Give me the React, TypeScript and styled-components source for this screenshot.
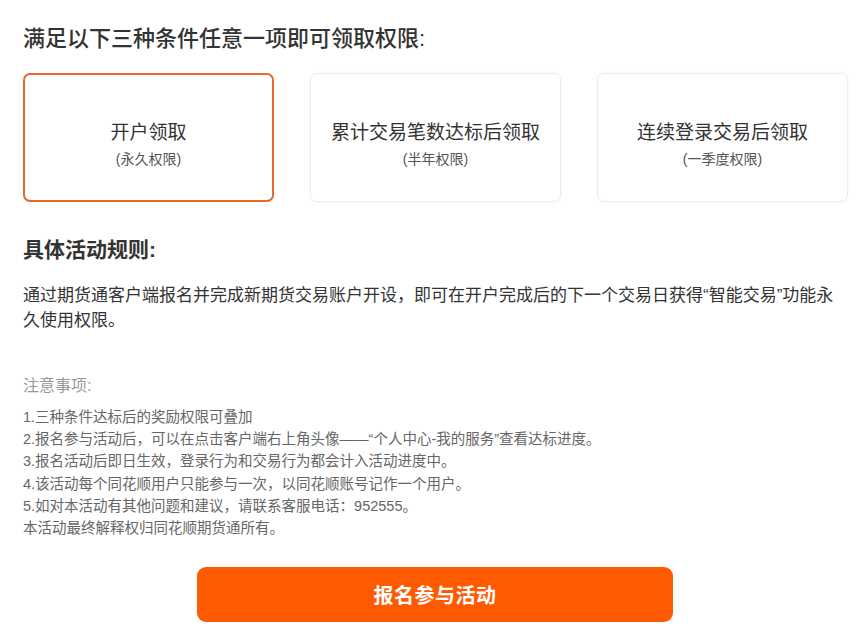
import styled, { createGlobalStyle } from 'styled-components';

const GlobalStyle = createGlobalStyle`
  html, body {
    margin: 0;
    padding: 0;
    background: #ffffff;
  }
  body {
    font-family: "Liberation Sans", "Noto Sans CJK SC", sans-serif;
    color: #333333;
  }
`;

const Page = styled.div`
  width: 865px;
  box-sizing: border-box;
  padding: 24px 22px 0 23px;
`;

const Title = styled.h2`
  margin: 0;
  font-size: 22px;
  line-height: 30px;
  font-weight: 500;
  color: #333333;
`;

const Cards = styled.div`
  display: grid;
  grid-template-columns: repeat(3, 251px);
  column-gap: 36px;
  margin-top: 19px;
`;

const Card = styled.div<{ $active?: boolean }>`
  height: 129px;
  box-sizing: border-box;
  border-radius: 7px;
  border: ${({ $active }) => ($active ? '2px solid #e5692a' : '1px solid #ececec')};
  box-shadow: ${({ $active }) => ($active ? 'none' : '0 0 3px rgba(0,0,0,0.05)')};
  display: flex;
  flex-direction: column;
  align-items: center;
  justify-content: center;
  padding-top: 14px;
`;

const CardTitle = styled.div`
  font-size: 19px;
  line-height: 26px;
  color: #333333;
`;

const CardSub = styled.div`
  margin-top: 3px;
  font-size: 14px;
  line-height: 20px;
  color: #555555;
`;

const Heading = styled.h3`
  margin: 34px 0 0;
  font-size: 21px;
  line-height: 28px;
  font-weight: 700;
  color: #333333;
`;

const Paragraph = styled.p`
  margin: 19px 0 0;
  width: 820px;
  font-size: 17px;
  line-height: 25px;
  color: #333333;
`;

const NoteTitle = styled.div`
  margin-top: 42px;
  font-size: 16px;
  line-height: 22px;
  color: #999999;
`;

const NoteList = styled.div`
  margin-top: 9px;
  display: flex;
  flex-direction: column;
`;

const NoteLine = styled.div`
  font-size: 14.5px;
  line-height: 22.2px;
  color: #666666;
`;

const ButtonRow = styled.div`
  display: flex;
  padding-left: 174px;
  margin-top: 28px;
`;

const JoinButton = styled.button`
  width: 476px;
  height: 55px;
  border: none;
  border-radius: 9px;
  background: #ff5a00;
  color: #ffffff;
  font-family: "Noto Sans CJK SC", sans-serif;
  font-size: 20px;
  font-weight: 700;
  letter-spacing: 0.5px;
  cursor: pointer;
`;

const cards = [
  { title: '开户领取', sub: '(永久权限)', active: true },
  { title: '累计交易笔数达标后领取', sub: '(半年权限)', active: false },
  { title: '连续登录交易后领取', sub: '(一季度权限)', active: false },
];

const notes = [
  '1.三种条件达标后的奖励权限可叠加',
  '2.报名参与活动后，可以在点击客户端右上角头像——“个人中心-我的服务”查看达标进度。',
  '3.报名活动后即日生效，登录行为和交易行为都会计入活动进度中。',
  '4.该活动每个同花顺用户只能参与一次，以同花顺账号记作一个用户。',
  '5.如对本活动有其他问题和建议，请联系客服电话：952555。',
  '本活动最终解释权归同花顺期货通所有。',
];

export default function App() {
  return (
    <>
      <GlobalStyle />
      <Page>
        <Title>满足以下三种条件任意一项即可领取权限:</Title>
        <Cards>
          {cards.map((c) => (
            <Card key={c.title} $active={c.active}>
              <CardTitle>{c.title}</CardTitle>
              <CardSub>{c.sub}</CardSub>
            </Card>
          ))}
        </Cards>
        <Heading>具体活动规则:</Heading>
        <Paragraph>
          通过期货通客户端报名并完成新期货交易账户开设，即可在开户完成后的下一个交易日获得“智能交易”功能永久使用权限。
        </Paragraph>
        <NoteTitle>注意事项:</NoteTitle>
        <NoteList>
          {notes.map((n) => (
            <NoteLine key={n}>{n}</NoteLine>
          ))}
        </NoteList>
        <ButtonRow>
          <JoinButton>报名参与活动</JoinButton>
        </ButtonRow>
      </Page>
    </>
  );
}
